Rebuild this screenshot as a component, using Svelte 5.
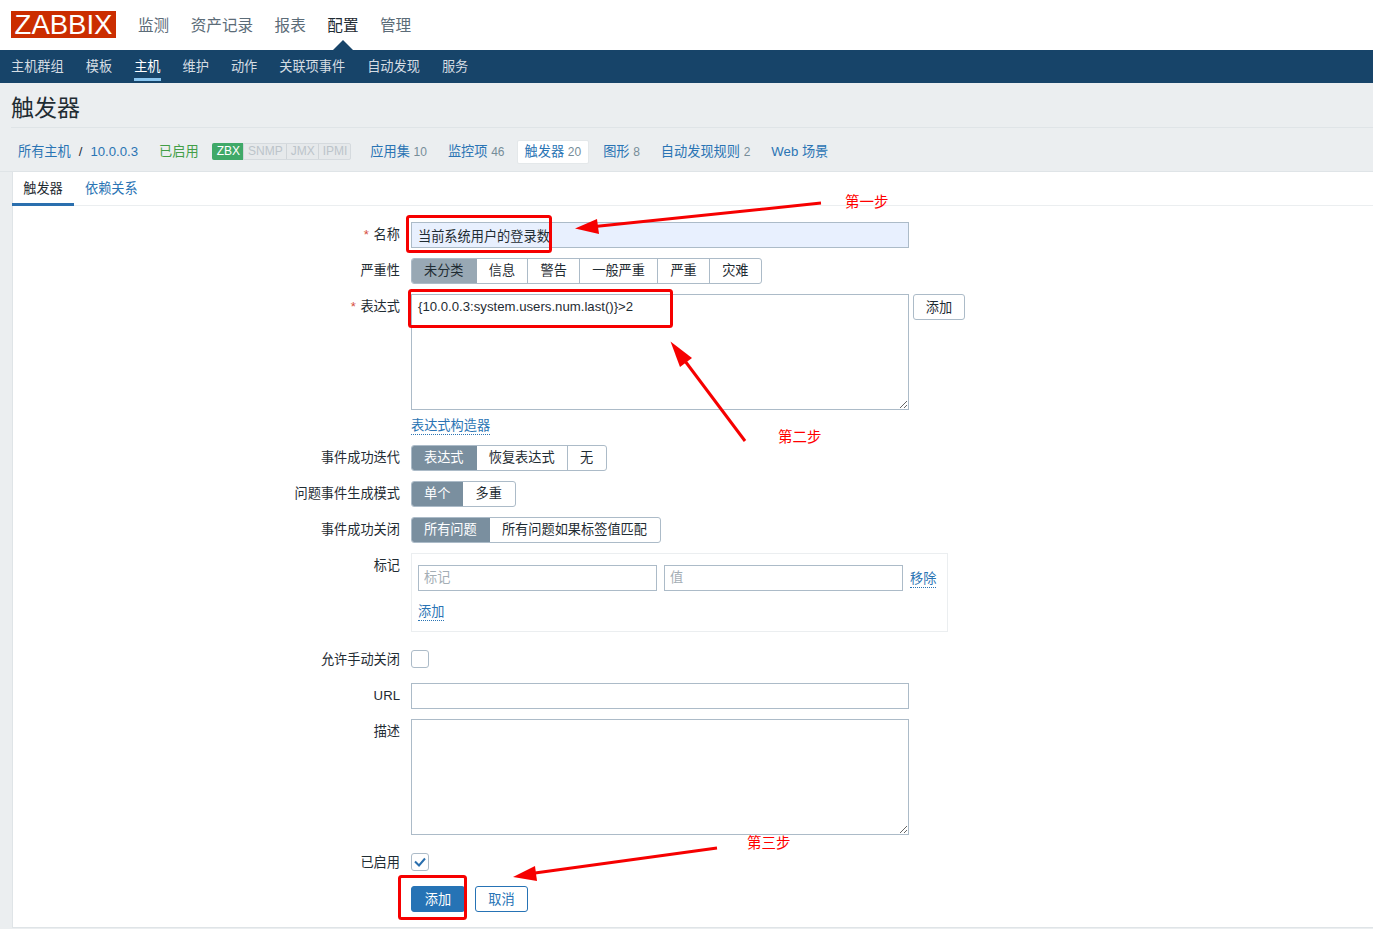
<script>
	const topNav = ['监测', '资产记录', '报表', '配置', '管理'];
	const subNav = ['主机群组', '模板', '主机', '维护', '动作', '关联项事件', '自动发现', '服务'];
	const severities = ['未分类', '信息', '警告', '一般严重', '严重', '灾难'];
</script>

<div class="page">
	<header class="top">
		<div class="logo">ZABBIX</div>
		<nav class="top__nav">
			{#each topNav as item}
				<span class="top__item" class:top__item--active={item === '配置'}>{item}</span>
			{/each}
		</nav>
	</header>

	<nav class="sub">
		{#each subNav as item}
			<span class="sub__item" class:sub__item--active={item === '主机'}>{item}</span>
		{/each}
	</nav>

	<h1 class="title">触发器</h1>

	<div class="hostnav">
		<a class="link">所有主机</a>
		<span class="slash">/</span>
		<a class="link">10.0.0.3</a>
		<span class="enabled">已启用</span>
		<div class="status">
			<span class="status__on">ZBX</span><span>SNMP</span><span>JMX</span><span>IPMI</span>
		</div>
		<a class="link hn hn--first">应用集 <em>10</em></a>
		<a class="link hn">监控项 <em>46</em></a>
		<a class="link hn hn--active">触发器 <em>20</em></a>
		<a class="link hn">图形 <em>8</em></a>
		<a class="link hn">自动发现规则 <em>2</em></a>
		<a class="link hn">Web 场景</a>
	</div>

	<main class="card">
		<div class="tabs">
			<span class="tab tab--active">触发器</span>
			<span class="tab link">依赖关系</span>
		</div>

		<form class="form">
			<label class="lbl"><i>*</i> 名称</label>
			<div><input class="input input--auto" value="当前系统用户的登录数" /></div>

			<label class="lbl">严重性</label>
			<div class="seg">
				{#each severities as s, i}
					<span class:seg--muted={i === 0}>{s}</span>
				{/each}
			</div>

			<label class="lbl"><i>*</i> 表达式</label>
			<div>
				<div class="expr">
					<textarea class="area" value={'{10.0.0.3:system.users.num.last()}>2'}></textarea>
					<span class="btn-alt">添加</span>
				</div>
				<a class="dotted builder">表达式构造器</a>
			</div>

			<label class="lbl">事件成功迭代</label>
			<div class="seg">
				<span class="seg--on">表达式</span><span>恢复表达式</span><span>无</span>
			</div>

			<label class="lbl">问题事件生成模式</label>
			<div class="seg">
				<span class="seg--on">单个</span><span>多重</span>
			</div>

			<label class="lbl">事件成功关闭</label>
			<div class="seg">
				<span class="seg--on">所有问题</span><span>所有问题如果标签值匹配</span>
			</div>

			<label class="lbl">标记</label>
			<div class="tags">
				<div class="tags__row">
					<input class="input input--tag" placeholder="标记" />
					<input class="input input--tag" placeholder="值" />
					<a class="dotted">移除</a>
				</div>
				<a class="dotted tags__add">添加</a>
			</div>

			<label class="lbl lbl--check">允许手动关闭</label>
			<div class="check-row"><span class="check"></span></div>

			<label class="lbl">URL</label>
			<div><input class="input" /></div>

			<label class="lbl">描述</label>
			<div><textarea class="area"></textarea></div>

			<label class="lbl lbl--check">已启用</label>
			<div class="check-row">
				<span class="check">
					<svg width="16" height="16" viewBox="0 0 16 16"><path d="M3 7.500 7 11.500 13 4.500" fill="none" stroke="#2a6fae" stroke-width="2" /></svg>
				</span>
			</div>

			<div></div>
			<div class="actions">
				<span class="btn-main">添加</span>
				<span class="btn-cancel">取消</span>
			</div>
		</form>
	</main>

	<svg class="marks" width="1373" height="929" viewBox="0 0 1373 929">
		<g fill="none" stroke="#f60000" stroke-width="3">
			<rect x="407.500" y="216.500" width="143" height="35" rx="2" />
			<rect x="409.500" y="290.500" width="262" height="36" rx="2" />
			<rect x="399.500" y="876.500" width="66" height="42" rx="2" />
			<path d="M821 203 595 226.500" />
			<path d="M745 441 682 357" />
			<path d="M717 848 535 873" />
		</g>
		<g fill="#f60000">
			<path d="M575 228.500 597 219 599 234Z" />
			<path d="M670.500 341.500 692 358 680 367Z" />
			<path d="M513 877 535 866 537 881Z" />
		</g>
	</svg>
	<span class="step step--1">第一步</span>
	<span class="step step--2">第二步</span>
	<span class="step step--3">第三步</span>
</div>

<style>
	:global(body) {
		margin: 0;
		background: #ebeef0;
	}

	.page {
		position: relative;
		height: 929px;
		overflow: hidden;
		font: 13.2px 'Liberation Sans', 'Noto Sans CJK SC', sans-serif;
		color: #1f2c33;
	}

	.top {
		display: flex;
		align-items: flex-start;
		height: 50px;
		background: #fff;
		padding-left: 11px;
	}

	.logo {
		width: 105px;
		height: 27px;
		margin-top: 11px;
		background: #cb2d00;
		color: #fff;
		font-size: 27.500px;
		line-height: 28px;
		text-align: center;
	}

	.top__nav {
		display: flex;
		gap: 21.500px;
		margin-left: 22px;
		padding-top: 15px;
		font-size: 15.600px;
		line-height: 22px;
		color: #5c6c78;
	}

	.top__item--active {
		position: relative;
		color: #1f2c33;
	}

	.top__item--active::after {
		content: '';
		position: absolute;
		left: 50%;
		top: 25px;
		margin-left: -10px;
		border: 10px solid transparent;
		border-top: 0;
		border-bottom-color: #174469;
	}

	.sub {
		display: flex;
		gap: 22px;
		height: 33px;
		background: #174469;
		padding-left: 11px;
		color: #d5dde3;
		line-height: 34px;
		box-sizing: border-box;
	}

	.sub__item--active {
		color: #fff;
		height: 31px;
		border-bottom: 3px solid #8ac6f0;
		box-sizing: border-box;
	}

	.title {
		margin: 0 0 0 11px;
		height: 45px;
		border-bottom: 1px solid #dfe4e7;
		font-size: 23px;
		font-weight: 400;
		line-height: 51px;
		box-sizing: border-box;
	}

	.hostnav {
		display: flex;
		align-items: center;
		height: 44px;
		padding: 4px 0 0 18px;
		border-bottom: 1px solid #dfe4e7;
		box-sizing: border-box;
		line-height: 22px;
	}

	.link,
	.dotted {
		color: #2a74b4;
	}

	.slash {
		margin: 0 8px 0 8px;
	}

	.enabled {
		margin-left: 21px;
		color: #429e47;
	}

	.status {
		display: flex;
		margin-left: 13px;
		height: 17px;
		border: 1px solid #d5dade;
		border-radius: 2px;
		box-sizing: border-box;
		font-size: 12px;
		line-height: 15px;
		color: #bcc4ca;
		background: #e6e9eb;
	}

	.status span {
		padding: 0 3px 0 4px;
		border-left: 1px solid #d0d5d9;
	}

	.status .status__on {
		background: #3fa968;
		color: #fff;
		border-left: 0;
		padding: 0 3px 0 5px;
		margin: -1px 0 -1px -1px;
		line-height: 17px;
		border-radius: 2px 0 0 2px;
	}

	.hn {
		margin-left: 7px;
		padding: 0 7px;
		white-space: nowrap;
	}

	.hn--first {
		margin-left: 12px;
	}

	.hn--active {
		background: #fff;
		border-radius: 2px;
		padding: 0 7px 0 7px;
		border: 1px solid #e4e8ea;
		margin-left: 5px;
	}

	.hn em {
		font-style: normal;
		font-size: 12px;
		color: #768d99;
	}

	.card {
		margin-left: 12px;
		height: 756px;
		background: #fff;
		border-left: 1px solid #dfe4e7;
		border-bottom: 1px solid #dfe4e7;
		box-sizing: border-box;
	}

	.tabs {
		display: flex;
		height: 34px;
		border-bottom: 1px solid #ebeef0;
		box-sizing: border-box;
	}

	.tab {
		padding: 0 11px;
		line-height: 34px;
	}

	.tab--active {
		height: 34px;
		border-bottom: 3px solid #2a6fae;
		box-sizing: border-box;
		padding: 0;
		margin-left: -1px;
		width: 62px;
		text-align: center;
	}

	.form {
		display: grid;
		grid-template-columns: 387px 1fr;
		column-gap: 11px;
		row-gap: 10px;
		padding-top: 16px;
	}

	.lbl {
		text-align: right;
		line-height: 26px;
		justify-self: end;
	}

	.lbl i {
		font-style: normal;
		color: #d64e3e;
		margin-right: 1px;
	}

	.lbl--check {
		margin-top: 5px;
	}

	.input {
		display: block;
		width: 498px;
		height: 26px;
		border: 1px solid #acbbc8;
		padding: 0 6px;
		box-sizing: border-box;
		font: inherit;
		color: inherit;
		background: #fff;
		outline: none;
	}

	.input::placeholder {
		color: #a4aeb5;
		opacity: 1;
	}

	.input--auto {
		background: #e8f0fe;
	}

	.input--tag {
		width: 239px;
		padding-left: 5px;
		padding-bottom: 2px;
	}

	.seg {
		display: flex;
		justify-self: start;
		height: 26px;
		border: 1px solid #acbbc8;
		border-radius: 3px;
		box-sizing: border-box;
		line-height: 23px;
		overflow: hidden;
	}

	.seg span {
		padding: 0 12.200px;
		border-left: 1px solid #acbbc8;
	}

	.seg span:first-child {
		border-left: 0;
	}

	.seg .seg--on {
		background: #7a8f9f;
		color: #fff;
		border-left: 0;
		padding: 0 13px 0 12px;
	}

	.seg .seg--on + span {
		border-left: 0;
	}

	.seg .seg--on ~ span:last-child {
		padding-right: 13.200px;
	}

	.seg .seg--muted {
		background: #98a8b4;
		padding: 0 13px 0 12px;
	}

	.seg .seg--muted + span {
		border-left: 0;
	}

	.expr {
		display: flex;
		align-items: flex-start;
		gap: 4px;
	}

	.area {
		display: block;
		width: 498px;
		height: 116px;
		border: 1px solid #acbbc8;
		padding: 4px 6px;
		margin: 0;
		box-sizing: border-box;
		font: inherit;
		color: inherit;
		outline: none;
	}

	.btn-alt {
		width: 52px;
		height: 26px;
		border: 1px solid #acbbc8;
		border-radius: 3px;
		box-sizing: border-box;
		text-align: center;
		line-height: 26px;
	}

	.dotted {
		border-bottom: 1px dotted #2a74b4;
	}

	.builder {
		display: inline-block;
		margin-top: 7px;
		line-height: 17px;
		height: 17px;
		vertical-align: top;
	}

	.tags {
		width: 537px;
		height: 79px;
		border: 1px solid #ebeef0;
		box-sizing: border-box;
		padding: 11px 6px 0;
	}

	.tags__row {
		display: flex;
		gap: 7px;
		align-items: center;
	}

	.tags__add {
		display: inline-block;
		margin-top: 13px;
		line-height: 16px;
		height: 16px;
	}

	.check-row {
		margin: 8px 0 5px;
		height: 18px;
	}

	.check {
		display: block;
		width: 18px;
		height: 18px;
		border: 1px solid #acbbc8;
		border-radius: 3px;
		box-sizing: border-box;
	}

	.check svg {
		display: block;
	}

	.actions {
		display: flex;
		gap: 10px;
	}

	.btn-main,
	.btn-cancel {
		height: 26px;
		border-radius: 3px;
		box-sizing: border-box;
		text-align: center;
		line-height: 26px;
		border: 1px solid #2673b5;
	}

	.btn-main {
		width: 54px;
		background: #2673b5;
		color: #fff;
	}

	.btn-cancel {
		width: 53px;
		color: #2673b5;
	}

	.marks {
		position: absolute;
		left: 0;
		top: 0;
		pointer-events: none;
	}

	.step {
		position: absolute;
		font-size: 14.500px;
		line-height: 16px;
		color: #f00;
	}

	.step--1 {
		left: 845px;
		top: 194px;
	}

	.step--2 {
		left: 778px;
		top: 429px;
	}

	.step--3 {
		left: 747px;
		top: 835px;
	}
</style>
